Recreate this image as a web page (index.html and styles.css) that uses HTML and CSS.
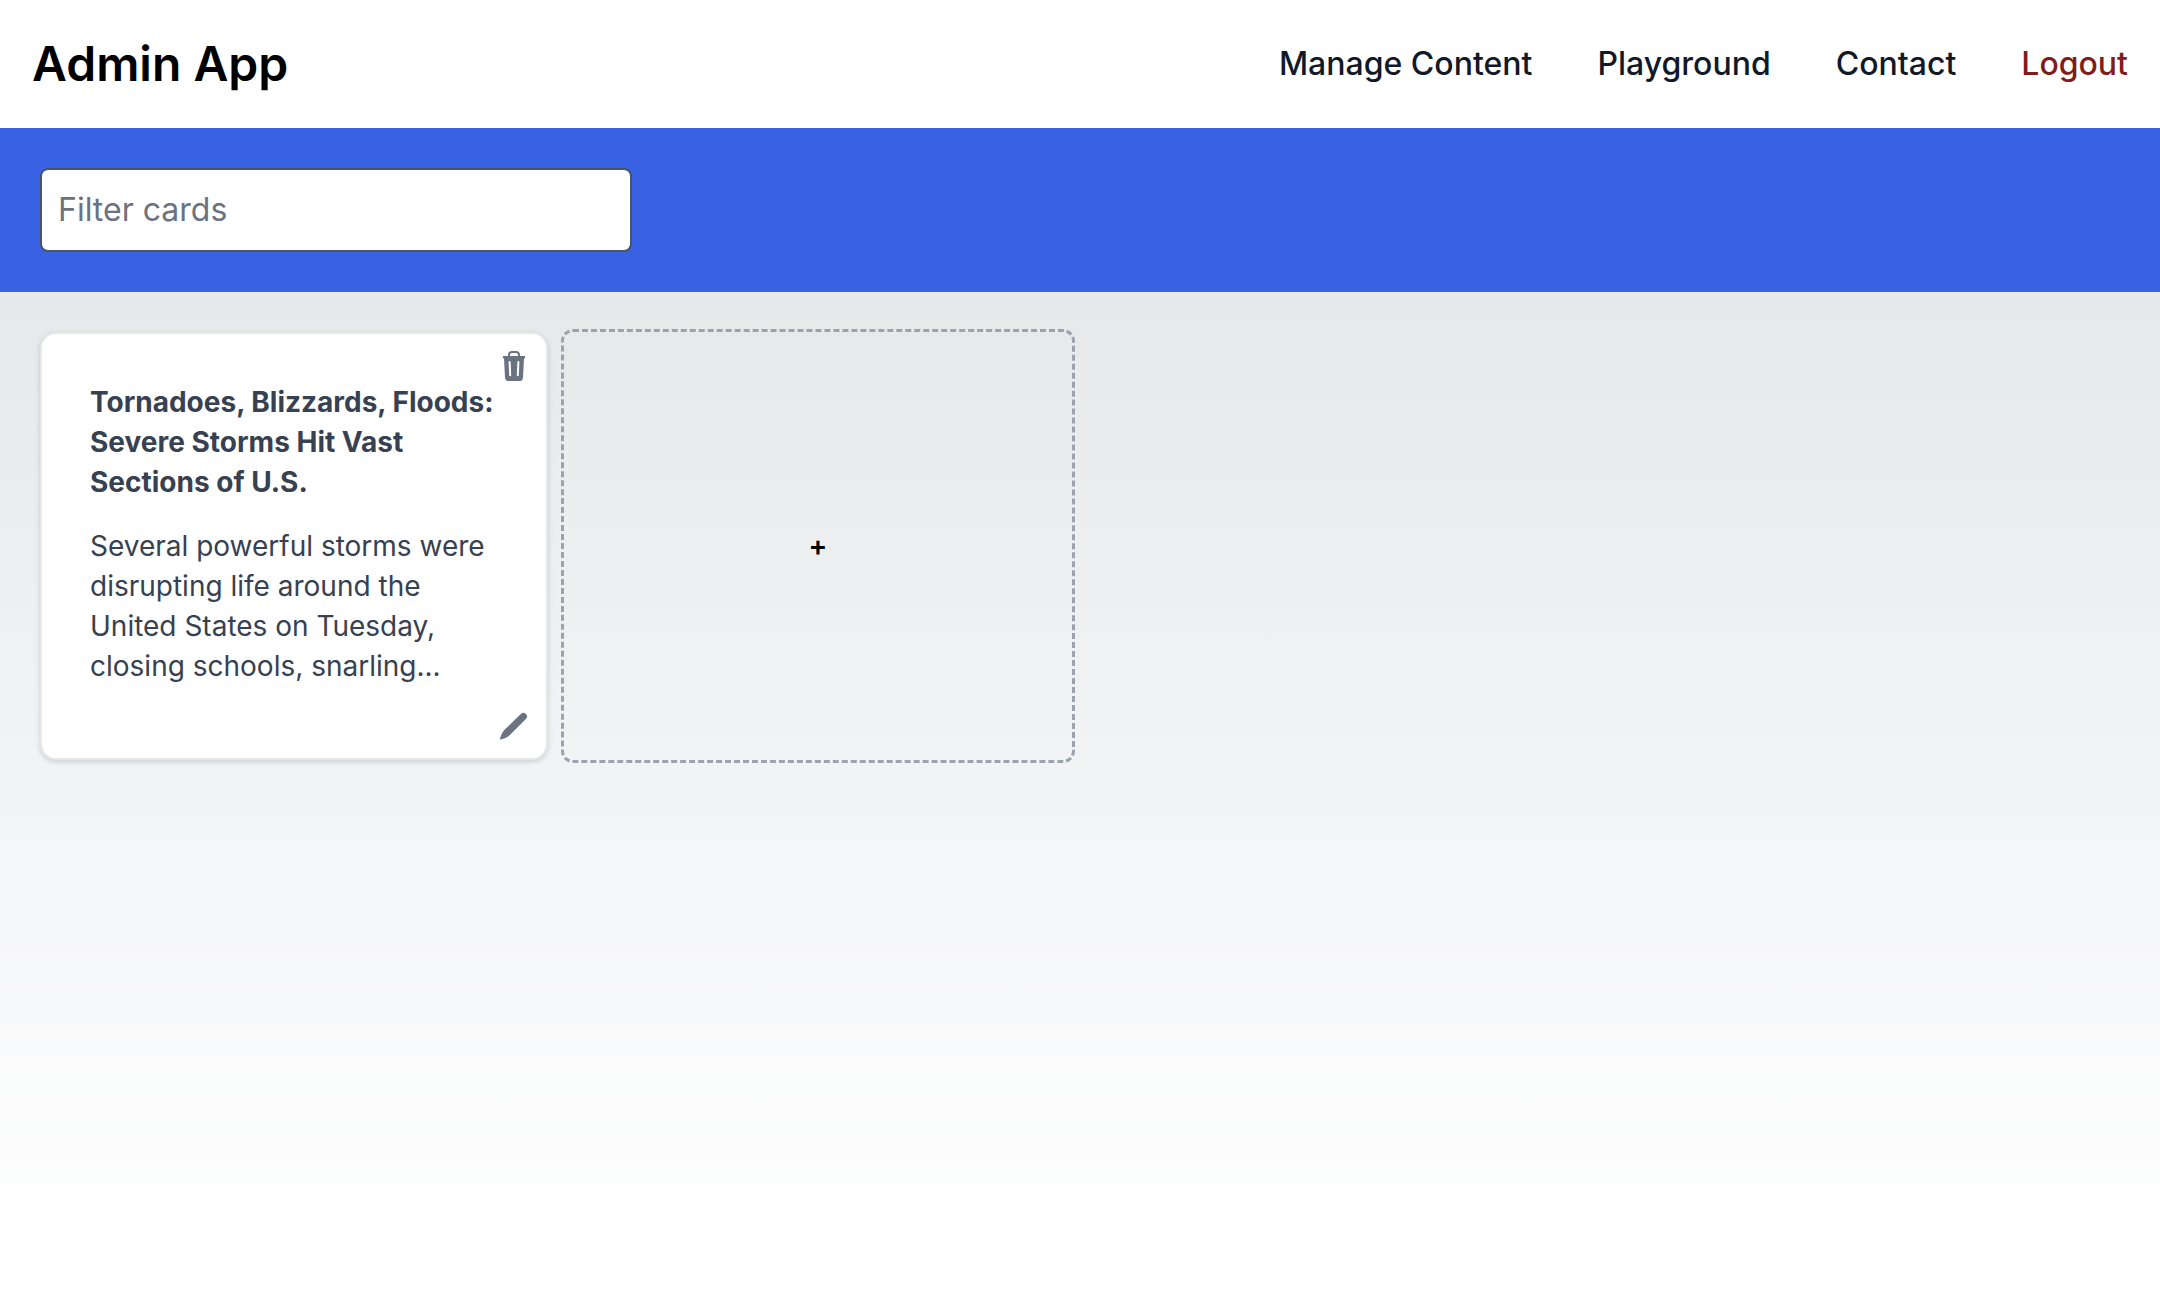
FILE: index.html
```html
<!DOCTYPE html>
<html lang="en">
<head>
  <meta charset="utf-8">
  <meta name="viewport" content="width=device-width, initial-scale=1">
  <title>Admin App</title>
  <link rel="stylesheet" href="styles.css">
</head>
<body>
  <header class="site-header">
    <a class="brand" href="#">Admin App</a>
    <nav class="site-nav" aria-label="Main">
      <a class="nav-link" href="#">Manage Content</a>
      <a class="nav-link" href="#">Playground</a>
      <a class="nav-link" href="#">Contact</a>
      <a class="nav-link nav-link-logout" href="#">Logout</a>
    </nav>
  </header>
  <form class="filter-bar" role="search">
    <input class="filter-input" type="text" placeholder="Filter cards" aria-label="Filter cards">
  </form>
  <main class="cards">
    <article class="card">
      <h2 class="card-title">Tornadoes, Blizzards, Floods: Severe Storms Hit Vast Sections of U.S.</h2>
      <p class="card-text">Several powerful storms were disrupting life around the United States on Tuesday, closing schools, snarling...</p>
      <button class="icon-button delete-button" type="button" aria-label="Delete card">
        <svg class="icon" viewBox="0 0 32 32" aria-hidden="true">
          <path fill="currentColor" fill-rule="evenodd" d="M10 6V5a4 4 0 0 1 4-4h4a4 4 0 0 1 4 4v1h4.200a1 1 0 0 1 1 1v.5a1 1 0 0 1-1 1h-.2L25 27.400a3.800 3.800 0 0 1-3.800 3.600H10.800A3.800 3.800 0 0 1 7 27.400L6 8.500h-.2a1 1 0 0 1-1-1V7a1 1 0 0 1 1-1zM12 6h8V5a2 2 0 0 0-2-2h-4a2 2 0 0 0-2 2zM10.600 12l.6 13.300a1 1 0 0 0 2-.1L12.600 12a1 1 0 0 0-2 0zM19.400 12l-.6 13.200a1 1 0 0 0 2 .1L21.400 12a1 1 0 0 0-2 0z"/>
        </svg>
      </button>
      <button class="icon-button edit-button" type="button" aria-label="Edit card">
        <svg class="icon" viewBox="0 0 32 32" aria-hidden="true">
          <path fill="currentColor" d="M2.700 29.500c-.5.200-.9-.2-.7-.7C3 25.500 4 22.300 6.300 20L22.800 3.900a3.600 3.600 0 0 1 5.100 5.100L11.600 25.300C9.300 27.600 6 28.600 2.700 29.500z"/>
        </svg>
      </button>
    </article>
    <button class="add-card" type="button" aria-label="Add card">+</button>
  </main>
</body>
</html>
```
FILE: styles.css
```css
*,
*::before,
*::after {
  box-sizing: border-box;
}

body {
  display: flex;
  flex-direction: column;
  min-height: 100vh;
  margin: 0;
  font-family: Inter, "Liberation Sans", sans-serif;
  font-size: 28px;
  line-height: 40px;
  color: #374151;
  background: #fff;
}

.site-header {
  display: flex;
  align-items: center;
  justify-content: space-between;
  padding: 32px;
  background: #fff;
}

.brand {
  font-size: 48px;
  font-weight: 600;
  line-height: 64px;
  color: #000;
  text-decoration: none;
}

.site-nav {
  display: flex;
  gap: 65px;
}

.nav-link {
  font-size: 32px;
  font-weight: 500;
  line-height: 48px;
  color: #111827;
  text-decoration: none;
}

.nav-link-logout {
  color: #7f1d1d;
}

.filter-bar {
  display: flex;
  padding: 40px;
  background: #3961e4;
}

.filter-input {
  width: 592px;
  max-width: 100%;
  height: 84px;
  padding: 0 16px 2px;
  border: 2px solid #4b5563;
  border-radius: 8px;
  background: #fff;
  font: inherit;
  font-size: 32px;
  color: #374151;
}

.filter-input::placeholder {
  color: #6b7280;
  opacity: 1;
}

.cards {
  display: flex;
  flex: 1;
  flex-wrap: wrap;
  align-items: center;
  align-content: flex-start;
  gap: 13px;
  padding: 37px 40px;
  background: linear-gradient(#e7e8ea, #f3f4f6 50%, #fff 96%);
}

.card {
  position: relative;
  width: 508px;
  padding: 48px 46px 72px 48px;
  border: 2px solid #e5e7eb;
  border-radius: 16px;
  background: #fff;
  box-shadow: 0 2px 6px rgba(0, 0, 0, 0.1), 0 2px 4px rgba(0, 0, 0, 0.06);
}

.card-title {
  margin: 0 0 24px;
  font-size: 28px;
  font-weight: 700;
}

.card-text {
  margin: 0;
}

.icon-button {
  position: absolute;
  right: 16px;
  width: 32px;
  height: 32px;
  padding: 0;
  border: 0;
  background: none;
  color: #6b7280;
  cursor: pointer;
}

.delete-button {
  top: 16px;
}

.edit-button {
  bottom: 16px;
}

.icon {
  display: block;
  width: 100%;
  height: 100%;
}

.add-card {
  width: 514px;
  height: 434px;
  padding: 0;
  border: 3px dashed #9ca3af;
  border-radius: 12px;
  background: none;
  font: inherit;
  font-weight: 600;
  color: #000;
  cursor: pointer;
}
```
